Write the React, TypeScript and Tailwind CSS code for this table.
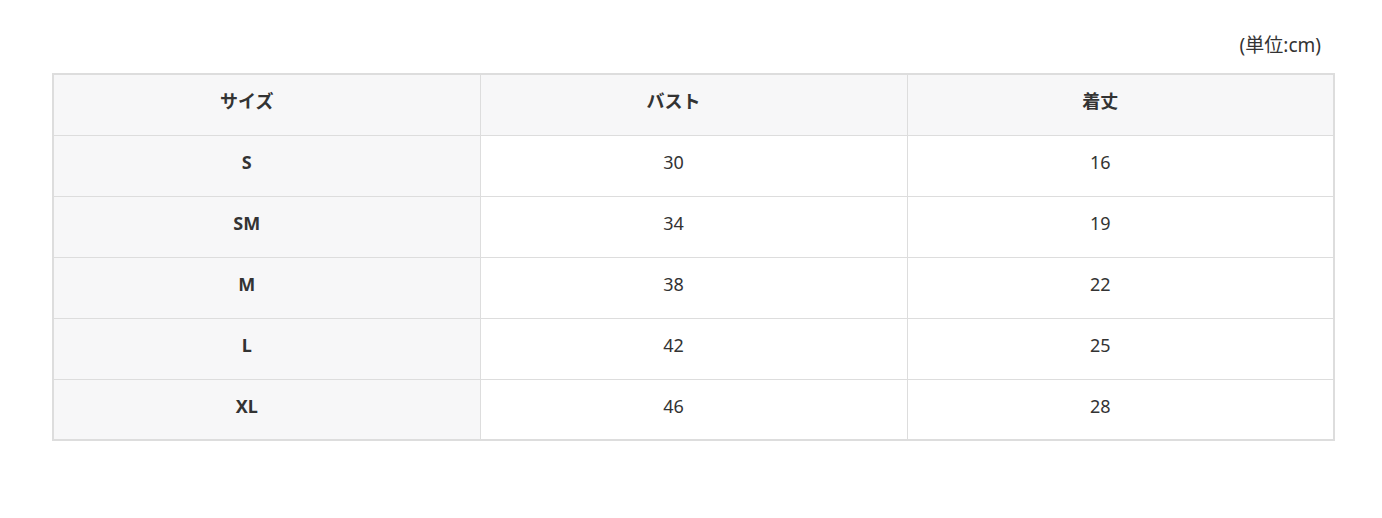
import React from "react";

const rows = [
  ["S", "30", "16"],
  ["SM", "34", "19"],
  ["M", "38", "22"],
  ["L", "42", "25"],
  ["XL", "46", "28"],
];

export default function App() {
  return (
    <div
      className="w-[1382px] h-[518px] bg-white text-[#333333] pl-[52px] pr-[47px] pt-[33px]"
      style={{ fontFamily: '"Noto Sans", "Noto Sans CJK JP", sans-serif' }}
    >
      <div className="flex justify-end pr-[14px] h-[24px] items-center text-[19px] leading-[24px] text-[#333]">
        (単位:cm)
      </div>
      <table className="mt-[16px] w-full border-collapse border-2 border-[#dddddd] table-fixed text-[18px]">
        <thead>
          <tr className="h-[61px]">
            <th className="w-1/3 border border-[#dddddd] bg-[#f7f7f8] font-bold pr-[40px] pb-[6px]">サイズ</th>
            <th className="w-1/3 border border-[#dddddd] bg-[#f7f7f8] font-bold pr-[40px] pb-[6px]">バスト</th>
            <th className="w-1/3 border border-[#dddddd] bg-[#f7f7f8] font-bold pr-[40px] pb-[6px]">着丈</th>
          </tr>
        </thead>
        <tbody>
          {rows.map((r) => (
            <tr key={r[0]} className="h-[61px]">
              <td className="border border-[#dddddd] bg-[#f7f7f8] text-center font-bold pr-[40px] pb-[6px]">{r[0]}</td>
              <td className="border border-[#dddddd] bg-white text-center pr-[40px] pb-[6px]">{r[1]}</td>
              <td className="border border-[#dddddd] bg-white text-center pr-[40px] pb-[6px]">{r[2]}</td>
            </tr>
          ))}
        </tbody>
      </table>
    </div>
  );
}
